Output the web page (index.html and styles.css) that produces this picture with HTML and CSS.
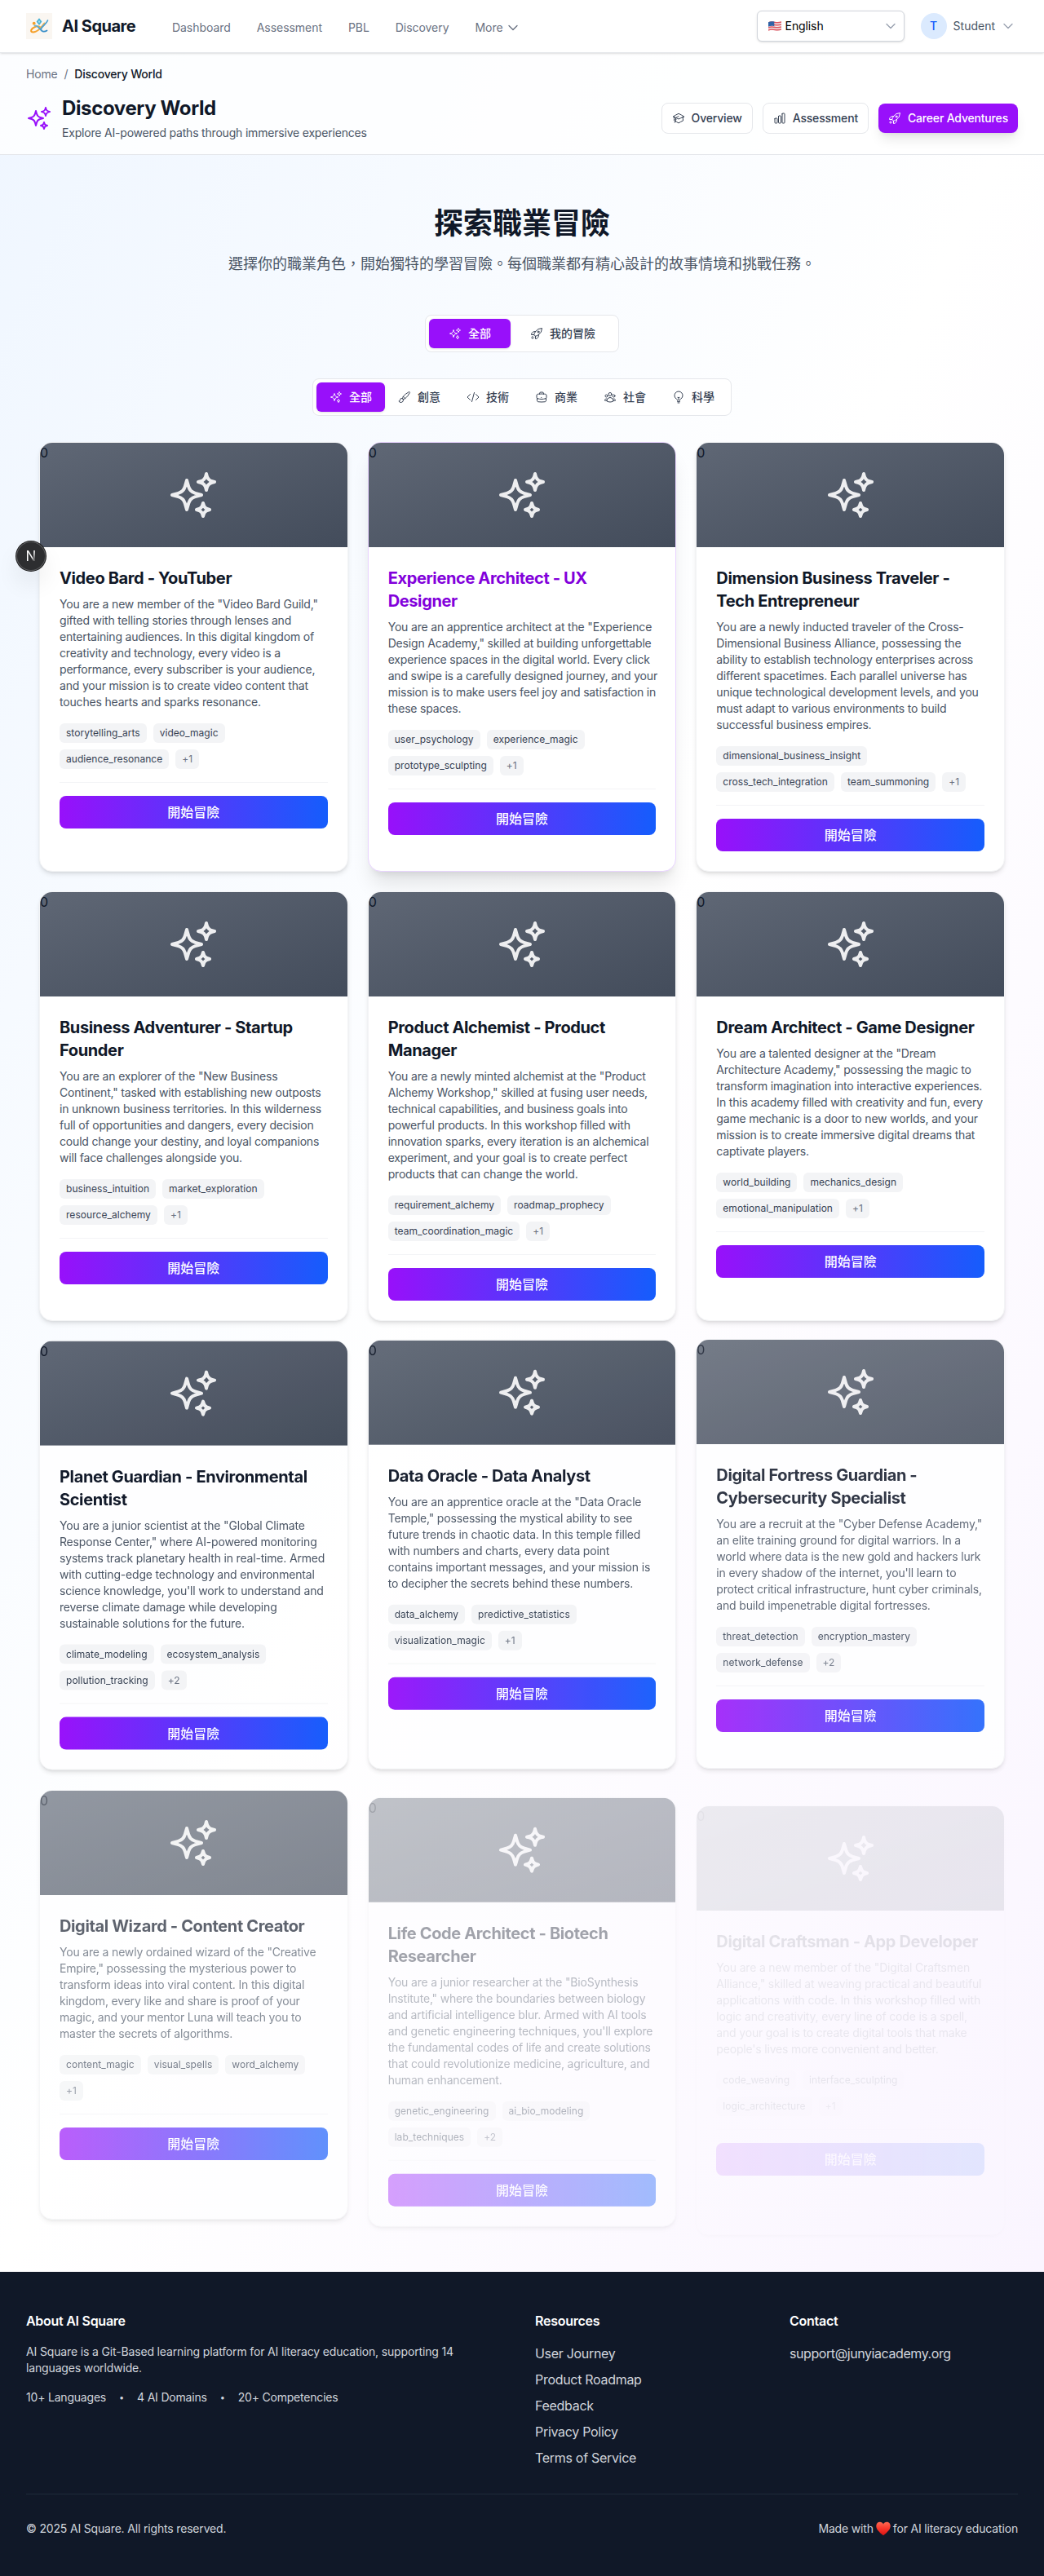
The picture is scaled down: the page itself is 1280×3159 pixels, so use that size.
FILE: index.html
```html
<!DOCTYPE html>
<html lang="zh-Hant">
<head>
<meta charset="utf-8">
<title>AI Square - Discovery World</title>
<link rel="stylesheet" href="styles.css">
</head>
<body>
<svg class="sprite" aria-hidden="true">
  <symbol id="sparkles" viewBox="0 0 24 24"><path d="M9.813 15.904 9 18.75l-.813-2.846a4.5 4.5 0 0 0-3.09-3.09L2.25 12l2.846-.813a4.5 4.5 0 0 0 3.09-3.09L9 5.25l.813 2.846a4.5 4.5 0 0 0 3.09 3.09L15.75 12l-2.846.813a4.5 4.5 0 0 0-3.09 3.09ZM18.259 8.715 18 9.75l-.259-1.035a3.375 3.375 0 0 0-2.455-2.456L14.25 6l1.036-.259a3.375 3.375 0 0 0 2.455-2.456L18 2.25l.259 1.035a3.375 3.375 0 0 0 2.456 2.456L21.75 6l-1.035.259a3.375 3.375 0 0 0-2.456 2.456ZM16.894 20.567 16.5 21.75l-.394-1.183a2.25 2.25 0 0 0-1.423-1.423L13.5 18.75l1.183-.394a2.25 2.25 0 0 0 1.423-1.423l.394-1.183.394 1.183a2.25 2.25 0 0 0 1.423 1.423l1.183.394-1.183.394a2.25 2.25 0 0 0-1.423 1.423Z"/></symbol>
  <symbol id="rocket" viewBox="0 0 24 24"><path d="M15.59 14.37a6 6 0 0 1-5.84 7.38v-4.8m5.84-2.58a14.98 14.98 0 0 0 6.16-12.12A14.98 14.98 0 0 0 9.631 8.41m5.96 5.96a14.926 14.926 0 0 1-5.841 2.58m-.119-8.54a6 6 0 0 0-7.381 5.84h4.8m2.581-5.84a14.927 14.927 0 0 0-2.58 5.84m2.699 2.7c-.103.021-.207.041-.311.06a15.09 15.09 0 0 1-2.448-2.448 14.9 14.9 0 0 1 .06-.312m-2.24 2.39a4.493 4.493 0 0 0-1.757 4.306 4.493 4.493 0 0 0 4.306-1.758M16.5 9a1.5 1.5 0 1 1-3 0 1.5 1.5 0 0 1 3 0Z"/></symbol>
  <symbol id="cap" viewBox="0 0 24 24"><path d="M4.26 10.147a60.438 60.438 0 0 0-.491 6.347A48.62 48.62 0 0 1 12 20.904a48.62 48.62 0 0 1 8.232-4.41 60.46 60.46 0 0 0-.491-6.347m-15.482 0a50.636 50.636 0 0 0-2.658-.813A59.906 59.906 0 0 1 12 3.493a59.903 59.903 0 0 1 10.399 5.84c-.896.248-1.783.52-2.658.814m-15.482 0A50.717 50.717 0 0 1 12 13.489a50.702 50.702 0 0 1 7.74-3.342M6.75 15a.75.75 0 1 0 0-1.5.75.75 0 0 0 0 1.5Zm0 0v-3.675A55.378 55.378 0 0 1 12 8.443m-7.007 11.55A5.981 5.981 0 0 0 6.75 15.75v-1.5"/></symbol>
  <symbol id="chart" viewBox="0 0 24 24"><path d="M3 13.125C3 12.504 3.504 12 4.125 12h2.25c.621 0 1.125.504 1.125 1.125v6.75C7.5 20.496 6.996 21 6.375 21h-2.25A1.125 1.125 0 0 1 3 19.875v-6.75ZM9.75 8.625c0-.621.504-1.125 1.125-1.125h2.25c.621 0 1.125.504 1.125 1.125v11.25c0 .621-.504 1.125-1.125 1.125h-2.25a1.125 1.125 0 0 1-1.125-1.125V8.625ZM16.5 4.125c0-.621.504-1.125 1.125-1.125h2.25C20.496 3 21 3.504 21 4.125v15.75c0 .621-.504 1.125-1.125 1.125h-2.25a1.125 1.125 0 0 1-1.125-1.125V4.125Z"/></symbol>
  <symbol id="brush" viewBox="0 0 24 24"><path d="M9.53 16.122a3 3 0 0 0-5.78 1.128 2.25 2.25 0 0 1-2.4 2.245 4.5 4.5 0 0 0 8.4-2.245c0-.399-.078-.78-.22-1.128Zm0 0a15.998 15.998 0 0 0 3.388-1.62m-5.043-.025a15.994 15.994 0 0 1 1.622-3.395m3.42 3.42a15.995 15.995 0 0 0 4.764-4.648l3.876-5.814a1.151 1.151 0 0 0-1.597-1.597L14.146 6.32a15.996 15.996 0 0 0-4.649 4.763m3.42 3.42a6.776 6.776 0 0 0-3.42-3.42"/></symbol>
  <symbol id="code" viewBox="0 0 24 24"><path d="M17.25 6.75 22.5 12l-5.25 5.25m-10.5 0L1.5 12l5.25-5.25m7.5-3-4.5 16.5"/></symbol>
  <symbol id="briefcase" viewBox="0 0 24 24"><path d="M20.25 14.15v4.25c0 1.094-.787 2.036-1.872 2.18-2.087.277-4.216.42-6.378.42s-4.291-.143-6.378-.42c-1.085-.144-1.872-1.086-1.872-2.18v-4.25m16.5 0a2.18 2.18 0 0 0 .75-1.661V8.706c0-1.081-.768-2.015-1.837-2.175a48.114 48.114 0 0 0-3.413-.387m4.5 8.006c-.194.165-.42.295-.673.38A23.978 23.978 0 0 1 12 15.75c-2.648 0-5.195-.429-7.577-1.22a2.016 2.016 0 0 1-.673-.38m0 0A2.18 2.18 0 0 1 3 12.489V8.706c0-1.081.768-2.015 1.837-2.175a48.111 48.111 0 0 1 3.413-.387m7.5 0V5.25A2.25 2.25 0 0 0 13.5 3h-3a2.25 2.25 0 0 0-2.25 2.25v.894m7.5 0a48.667 48.667 0 0 0-7.5 0M12 12.75h.008v.008H12v-.008Z"/></symbol>
  <symbol id="group" viewBox="0 0 24 24"><path d="M18 18.72a9.094 9.094 0 0 0 3.741-.479 3 3 0 0 0-4.682-2.72m.94 3.198.001.031c0 .225-.012.447-.037.666A11.944 11.944 0 0 1 12 21c-2.17 0-4.207-.576-5.963-1.584A6.062 6.062 0 0 1 6 18.719m12 0a5.971 5.971 0 0 0-.941-3.197m0 0A5.995 5.995 0 0 0 12 12.75a5.995 5.995 0 0 0-5.058 2.772m0 0a3 3 0 0 0-4.681 2.72 8.986 8.986 0 0 0 3.74.477m.94-3.197a5.971 5.971 0 0 0-.94 3.197M15 6.75a3 3 0 1 1-6 0 3 3 0 0 1 6 0Zm6 3a2.25 2.25 0 1 1-4.5 0 2.25 2.25 0 0 1 4.5 0Zm-13.5 0a2.25 2.25 0 1 1-4.5 0 2.25 2.25 0 0 1 4.5 0Z"/></symbol>
  <symbol id="bulb" viewBox="0 0 24 24"><path d="M12 18v-5.25m0 0a6.01 6.01 0 0 0 1.5-.189m-1.5.189a6.01 6.01 0 0 1-1.5-.189m3.75 7.478a12.06 12.06 0 0 1-4.5 0m3.75 2.383a14.406 14.406 0 0 1-3 0M14.25 18v-.192c0-.983.658-1.823 1.508-2.316a7.5 7.5 0 1 0-7.517 0c.85.493 1.509 1.333 1.509 2.316V18"/></symbol>
  <symbol id="chevron" viewBox="0 0 24 24"><path d="m19.5 8.25-7.5 7.5-7.5-7.5"/></symbol>
</svg>

<nav class="topbar">
  <div class="brand">
    <svg class="brand-logo" viewBox="0 0 32 32">
      <defs>
        <linearGradient id="lg-o" x1="0" y1="0" x2="1" y2="0"><stop offset="0" stop-color="#f59a1f"/><stop offset="1" stop-color="#f3b350"/></linearGradient>
        <linearGradient id="lg-b" x1="0" y1="0" x2="1" y2="1"><stop offset="0" stop-color="#7cc4e0"/><stop offset="1" stop-color="#2f86c5"/></linearGradient>
      </defs>
      <rect width="32" height="32" fill="#faf6f1"/>
      <path d="M16 6.2 19.4 10.6 16 15 12.600 10.6Z" fill="#48b0d3"/>
      <path d="M16 8.800 17.300 10.600 16 12.500 14.700 10.600Z" fill="#a5dcec"/>
      <circle cx="9.700" cy="12.700" r="1.900" fill="#f5a02a"/>
      <path d="M17.500 17.500C14 14.800 7.500 17.500 6.200 21.200 5.500 23.800 9 23.800 12 22.600 17.500 20.400 20 15 22.500 12.500" fill="none" stroke="url(#lg-o)" stroke-width="2" stroke-linecap="round"/>
      <path d="M26.500 9C24.500 14 20 15.500 18.500 19 17.500 22.500 22 23.500 25.500 21.500M10.500 15.500C14 15 16 18.500 18 20.500" fill="none" stroke="url(#lg-b)" stroke-width="1.800" stroke-linecap="round"/>
    </svg>
    <span class="brand-name">AI Square</span>
  </div>
  <div class="nav-links">
    <a>Dashboard</a><a>Assessment</a><a>PBL</a><a>Discovery</a>
    <a class="nav-more">More <svg class="icon"><use href="#chevron"/></svg></a>
  </div>
  <div class="nav-right">
    <div class="lang-select">
      <svg class="flag" viewBox="0 0 16 16">
        <path d="M0 3.200C3 1.700 5 2.100 8 2.700S13 3.300 16 2.200V12.800C13 14 11 13.700 8 13.100S3 12.300 0 13.700Z" fill="#f2e9ea"/>
        <path d="M0 4C3 2.500 5 2.900 8 3.500S13 4.100 16 3M0 7C3 5.500 5 5.900 8 6.500S13 7.100 16 6M0 10C3 8.500 5 8.900 8 9.500S13 10.100 16 9M0 13C3 11.500 5 11.900 8 12.500S13 13.100 16 12" fill="none" stroke="#dd5560" stroke-width="1.500"/>
        <path d="M0 3.200C2.500 2 4.500 2 7.300 2.500V8.200C4.500 7.600 2.500 7.600 0 8.800Z" fill="#2f62a6"/>
      </svg>
      <span>English</span>
      <svg class="icon chev"><use href="#chevron"/></svg>
    </div>
    <div class="user">
      <span class="avatar">T</span><span class="user-name">Student</span>
      <svg class="icon chev"><use href="#chevron"/></svg>
    </div>
  </div>
</nav>

<div class="page">
  <header class="page-head">
    <div class="crumbs"><span>Home</span><span>/</span><b>Discovery World</b></div>
    <div class="head-row">
      <div class="head-title">
        <svg class="icon head-icon"><use href="#sparkles"/></svg>
        <div><h1>Discovery World</h1><p>Explore AI-powered paths through immersive experiences</p></div>
      </div>
      <div class="head-tabs">
        <a class="tab"><svg class="icon"><use href="#cap"/></svg>Overview</a>
        <a class="tab"><svg class="icon"><use href="#chart"/></svg>Assessment</a>
        <a class="tab tab-on"><svg class="icon"><use href="#rocket"/></svg>Career Adventures</a>
      </div>
    </div>
  </header>

  <main>
    <h2>探索職業冒險</h2>
    <p class="lead">選擇你的職業角色，開始獨特的學習冒險。每個職業都有精心設計的故事情境和挑戰任務。</p>
    <div class="seg seg-wide">
      <a class="on"><svg class="icon"><use href="#sparkles"/></svg>全部</a>
      <a><svg class="icon"><use href="#rocket"/></svg>我的冒險</a>
    </div>
    <div class="seg seg-cat">
      <a class="on"><svg class="icon"><use href="#sparkles"/></svg>全部</a>
      <a><svg class="icon"><use href="#brush"/></svg>創意</a>
      <a><svg class="icon"><use href="#code"/></svg>技術</a>
      <a><svg class="icon"><use href="#briefcase"/></svg>商業</a>
      <a><svg class="icon"><use href="#group"/></svg>社會</a>
      <a><svg class="icon"><use href="#bulb"/></svg>科學</a>
    </div>

    <div class="grid">
      <article class="card">
        <div class="cover">0<svg class="icon"><use href="#sparkles"/></svg></div>
        <div class="body">
          <h3>Video Bard - YouTuber</h3>
          <p>You are a new member of the "Video Bard Guild,"
gifted with telling stories through lenses and
entertaining audiences. In this digital kingdom of
creativity and technology, every video is a
performance, every subscriber is your audience,
and your mission is to create video content that
touches hearts and sparks resonance.</p>
          <div class="tags"><span>storytelling_arts</span><span>video_magic</span><span>audience_resonance</span><span class="more">+1</span></div>
          <div class="action"><button>開始冒險</button></div>
        </div>
      </article>
      <article class="card card-hover">
        <div class="cover">0<svg class="icon"><use href="#sparkles"/></svg></div>
        <div class="body">
          <h3>Experience Architect - UX
Designer</h3>
          <p>You are an apprentice architect at the "Experience
Design Academy," skilled at building unforgettable
experience spaces in the digital world. Every click
and swipe is a carefully designed journey, and your
mission is to make users feel joy and satisfaction in
these spaces.</p>
          <div class="tags"><span>user_psychology</span><span>experience_magic</span><span>prototype_sculpting</span><span class="more">+1</span></div>
          <div class="action"><button>開始冒險</button></div>
        </div>
      </article>
      <article class="card">
        <div class="cover">0<svg class="icon"><use href="#sparkles"/></svg></div>
        <div class="body">
          <h3>Dimension Business Traveler -
Tech Entrepreneur</h3>
          <p>You are a newly inducted traveler of the Cross-
Dimensional Business Alliance, possessing the
ability to establish technology enterprises across
different spacetimes. Each parallel universe has
unique technological development levels, and you
must adapt to various environments to build
successful business empires.</p>
          <div class="tags"><span>dimensional_business_insight</span><span>cross_tech_integration</span><span>team_summoning</span><span class="more">+1</span></div>
          <div class="action"><button>開始冒險</button></div>
        </div>
      </article>
      <article class="card">
        <div class="cover">0<svg class="icon"><use href="#sparkles"/></svg></div>
        <div class="body">
          <h3>Business Adventurer - Startup
Founder</h3>
          <p>You are an explorer of the "New Business
Continent," tasked with establishing new outposts
in unknown business territories. In this wilderness
full of opportunities and dangers, every decision
could change your destiny, and loyal companions
will face challenges alongside you.</p>
          <div class="tags"><span>business_intuition</span><span>market_exploration</span><span>resource_alchemy</span><span class="more">+1</span></div>
          <div class="action"><button>開始冒險</button></div>
        </div>
      </article>
      <article class="card">
        <div class="cover">0<svg class="icon"><use href="#sparkles"/></svg></div>
        <div class="body">
          <h3>Product Alchemist - Product
Manager</h3>
          <p>You are a newly minted alchemist at the "Product
Alchemy Workshop," skilled at fusing user needs,
technical capabilities, and business goals into
powerful products. In this workshop filled with
innovation sparks, every iteration is an alchemical
experiment, and your goal is to create perfect
products that can change the world.</p>
          <div class="tags"><span>requirement_alchemy</span><span>roadmap_prophecy</span><span>team_coordination_magic</span><span class="more">+1</span></div>
          <div class="action"><button>開始冒險</button></div>
        </div>
      </article>
      <article class="card">
        <div class="cover">0<svg class="icon"><use href="#sparkles"/></svg></div>
        <div class="body">
          <h3>Dream Architect - Game Designer</h3>
          <p>You are a talented designer at the "Dream
Architecture Academy," possessing the magic to
transform imagination into interactive experiences.
In this academy filled with creativity and fun, every
game mechanic is a door to new worlds, and your
mission is to create immersive digital dreams that
captivate players.</p>
          <div class="tags"><span>world_building</span><span>mechanics_design</span><span>emotional_manipulation</span><span class="more">+1</span></div>
          <div class="action"><button>開始冒險</button></div>
        </div>
      </article>
      <article class="card enter-7">
        <div class="cover">0<svg class="icon"><use href="#sparkles"/></svg></div>
        <div class="body">
          <h3>Planet Guardian - Environmental
Scientist</h3>
          <p>You are a junior scientist at the "Global Climate
Response Center," where AI-powered monitoring
systems track planetary health in real-time. Armed
with cutting-edge technology and environmental
science knowledge, you'll work to understand and
reverse climate damage while developing
sustainable solutions for the future.</p>
          <div class="tags"><span>climate_modeling</span><span>ecosystem_analysis</span><span>pollution_tracking</span><span class="more">+2</span></div>
          <div class="action"><button>開始冒險</button></div>
        </div>
      </article>
      <article class="card enter-8">
        <div class="cover">0<svg class="icon"><use href="#sparkles"/></svg></div>
        <div class="body">
          <h3>Data Oracle - Data Analyst</h3>
          <p>You are an apprentice oracle at the "Data Oracle
Temple," possessing the mystical ability to see
future trends in chaotic data. In this temple filled
with numbers and charts, every data point
contains important messages, and your mission is
to decipher the secrets behind these numbers.</p>
          <div class="tags"><span>data_alchemy</span><span>predictive_statistics</span><span>visualization_magic</span><span class="more">+1</span></div>
          <div class="action"><button>開始冒險</button></div>
        </div>
      </article>
      <article class="card enter-9">
        <div class="cover">0<svg class="icon"><use href="#sparkles"/></svg></div>
        <div class="body">
          <h3>Digital Fortress Guardian -
Cybersecurity Specialist</h3>
          <p>You are a recruit at the "Cyber Defense Academy,"
an elite training ground for digital warriors. In a
world where data is the new gold and hackers lurk
in every shadow of the internet, you'll learn to
protect critical infrastructure, hunt cyber criminals,
and build impenetrable digital fortresses.</p>
          <div class="tags"><span>threat_detection</span><span>encryption_mastery</span><span>network_defense</span><span class="more">+2</span></div>
          <div class="action"><button>開始冒險</button></div>
        </div>
      </article>
      <article class="card enter-10">
        <div class="cover">0<svg class="icon"><use href="#sparkles"/></svg></div>
        <div class="body">
          <h3>Digital Wizard - Content Creator</h3>
          <p>You are a newly ordained wizard of the "Creative
Empire," possessing the mysterious power to
transform ideas into viral content. In this digital
kingdom, every like and share is proof of your
magic, and your mentor Luna will teach you to
master the secrets of algorithms.</p>
          <div class="tags"><span>content_magic</span><span>visual_spells</span><span>word_alchemy</span><span class="more">+1</span></div>
          <div class="action"><button>開始冒險</button></div>
        </div>
      </article>
      <article class="card enter-11">
        <div class="cover">0<svg class="icon"><use href="#sparkles"/></svg></div>
        <div class="body">
          <h3>Life Code Architect - Biotech
Researcher</h3>
          <p>You are a junior researcher at the "BioSynthesis
Institute," where the boundaries between biology
and artificial intelligence blur. Armed with AI tools
and genetic engineering techniques, you'll explore
the fundamental codes of life and create solutions
that could revolutionize medicine, agriculture, and
human enhancement.</p>
          <div class="tags"><span>genetic_engineering</span><span>ai_bio_modeling</span><span>lab_techniques</span><span class="more">+2</span></div>
          <div class="action"><button>開始冒險</button></div>
        </div>
      </article>
      <article class="card enter-12">
        <div class="cover">0<svg class="icon"><use href="#sparkles"/></svg></div>
        <div class="body">
          <h3>Digital Craftsman - App Developer</h3>
          <p>You are a new member of the "Digital Craftsmen
Alliance," skilled at weaving practical and beautiful
applications with code. In this workshop filled with
logic and creativity, every line of code is a spell,
and your goal is to create digital tools that make
people's lives more convenient and better.</p>
          <div class="tags"><span>code_weaving</span><span>interface_sculpting</span><span>logic_architecture</span><span class="more">+1</span></div>
          <div class="action"><button>開始冒險</button></div>
        </div>
      </article>
    </div>
  </main>
</div>

<footer class="footer">
  <div class="foot-grid">
    <section class="about">
      <h4>About AI Square</h4>
      <p>AI Square is a Git-Based learning platform for AI literacy education, supporting 14
languages worldwide.</p>
      <div class="facts"><span>10+ Languages</span><span class="dot">•</span><span>4 AI Domains</span><span class="dot">•</span><span>20+ Competencies</span></div>
    </section>
    <section>
      <h4>Resources</h4>
      <ul><li>User Journey</li><li>Product Roadmap</li><li>Feedback</li><li>Privacy Policy</li><li>Terms of Service</li></ul>
    </section>
    <section>
      <h4>Contact</h4>
      <ul><li class="mail">support@junyiacademy.org</li></ul>
    </section>
  </div>
  <div class="foot-bottom">
    <span>© 2025 AI Square. All rights reserved.</span>
    <span class="made">Made with <svg class="heart" viewBox="1 1 16 16.500"><defs><linearGradient id="hg" x1="0" y1="0" x2="0" y2="1"><stop offset="0" stop-color="#ff6a52"/><stop offset=".5" stop-color="#f8352a"/><stop offset="1" stop-color="#d81313"/></linearGradient></defs><path d="M9 16.800C5 13.600 1 10.200 1 6.200 1 3.500 2.900 1.700 5.100 1.700 6.900 1.700 8.300 2.700 9 4.200 9.700 2.700 11.100 1.700 12.900 1.700 15.100 1.700 17 3.500 17 6.200 17 10.200 13 13.600 9 16.800Z" fill="url(#hg)"/></svg> for AI literacy education</span>
  </div>
</footer>

<div class="dev-badge"><span>N</span></div>
</body>
</html>
```

FILE: styles.css
```css
* { box-sizing: border-box; margin: 0; padding: 0; }
body {
  position: relative;
  font-family: Inter, "Noto Sans CJK TC", sans-serif;
  font-size: 16px;
  line-height: 24px;
  color: #101828;
  background: #fff;
}
.sprite { position: absolute; width: 0; height: 0; }
.icon {
  width: 16px;
  height: 16px;
  flex: none;
  fill: none;
  stroke: currentColor;
  stroke-width: 1.5;
  stroke-linecap: round;
  stroke-linejoin: round;
}

/* top bar */
.topbar {
  position: relative;
  z-index: 2;
  display: flex;
  align-items: center;
  height: 65px;
  padding: 0 32px 1px;
  background: #fff;
  border-bottom: 1px solid #e5e7eb;
  box-shadow: 0 1px 3px rgba(0,0,0,.1), 0 1px 2px -1px rgba(0,0,0,.1);
}
.brand { display: flex; align-items: center; gap: 12px; width: 179px; }
.brand-logo { width: 32px; height: 32px; }
.brand-name { font-size: 20px; font-weight: 700; line-height: 28px; letter-spacing: -.5px; }
.nav-links {
  display: flex;
  gap: 32px;
  padding-top: 4px;
  font-size: 14px;
  line-height: 20px;
  letter-spacing: -.05px;
  color: #6a7282;
}
.nav-more { display: flex; align-items: center; gap: 4px; }
.nav-more .icon { stroke-width: 2; }
.nav-right { display: flex; align-items: center; gap: 20px; margin-left: auto; font-size: 14px; line-height: 20px; }
.lang-select {
  display: flex;
  align-items: center;
  gap: 5px;
  width: 181px;
  height: 38px;
  padding: 0 8px 0 13px;
  color: #000;
  letter-spacing: -.1px;
  background: #fff;
  border: 1px solid #d1d5dc;
  border-radius: 6px;
  box-shadow: 0 1px 3px rgba(0,0,0,.1), 0 1px 2px -1px rgba(0,0,0,.1);
}
.flag { width: 16px; height: 16px; }
.chev { margin-left: auto; color: #99a1af; stroke-width: 2; }
.user { display: flex; align-items: center; gap: 8px; padding-right: 4px; color: #4a5565; }
.avatar {
  display: grid;
  place-items: center;
  width: 32px;
  height: 32px;
  border-radius: 50%;
  background: #dbeafe;
  color: #155dfc;
  font-weight: 500;
}

/* page header */
.page { background: linear-gradient(to bottom right, #eff6ff, #fff 50%, #faf5ff); }
.page-head { height: 125px; padding: 16px 32px; background: rgba(255,255,255,.8); border-bottom: 1px solid #e5e7eb; }
.crumbs { display: flex; gap: 8px; margin-bottom: 16px; font-size: 14px; line-height: 20px; letter-spacing: -.2px; color: #6a7282; }
.crumbs b { font-weight: 500; color: #101828; }
.head-row { display: flex; align-items: center; justify-content: space-between; }
.head-title { display: flex; align-items: center; gap: 12px; }
.head-icon { width: 32px; height: 32px; color: #9810fa; }
.head-title h1 { font-size: 24px; line-height: 32px; letter-spacing: -.37px; }
.head-title p { margin-top: 4px; font-size: 14px; line-height: 20px; letter-spacing: -.195px; color: #4a5565; }
.head-tabs { display: flex; align-items: center; gap: 12px; }
.tab {
  display: flex;
  align-items: center;
  gap: 8px;
  padding: 8px 12px;
  font-size: 14px;
  font-weight: 500;
  line-height: 20px;
  letter-spacing: -.18px;
  color: #364153;
  background: #fff;
  border: 1px solid #e5e7eb;
  border-radius: 8px;
}
.tab-on { color: #fff; background: #9810fa; border: 0; box-shadow: 0 10px 15px -3px rgba(0,0,0,.1), 0 4px 6px -4px rgba(0,0,0,.1); }

/* intro and filters */
main { display: flex; flex-direction: column; align-items: center; padding: 64px 48px; }
h2 { font-size: 36px; line-height: 40px; margin-bottom: 16px; }
.lead { font-size: 18px; line-height: 28px; color: #4a5565; margin-bottom: 48px; }
.seg { display: flex; padding: 4px; margin-bottom: 32px; background: #fff; border: 1px solid #e5e7eb; border-radius: 8px; }
.seg a {
  display: flex;
  align-items: center;
  gap: 8px;
  height: 36px;
  padding: 0 16px;
  font-size: 14px;
  font-weight: 500;
  line-height: 20px;
  color: #364153;
  border-radius: 6px;
}
.seg-wide a { padding: 0 24px; }
.seg .on { color: #fff; background: #9810fa; box-shadow: 0 1px 3px rgba(0,0,0,.1), 0 1px 2px -1px rgba(0,0,0,.1); }

/* career cards */
.grid { display: grid; grid-template-columns: repeat(3, 1fr); gap: 24px; width: 100%; }
.card {
  height: 527px;
  overflow: hidden;
  background: #fff;
  border: 1px solid #f3f4f6;
  border-radius: 16px;
  box-shadow: 0 4px 6px -1px rgba(0,0,0,.1), 0 2px 4px -2px rgba(0,0,0,.1);
}
.card-hover { border-color: #e9d4ff; box-shadow: 0 20px 25px -5px rgba(0,0,0,.1), 0 8px 10px -6px rgba(0,0,0,.1); }
.card-hover h3 { color: #8200db; }
.cover { position: relative; height: 128px; background: linear-gradient(to bottom right, #5f6775, #434c5b); }
.cover .icon { position: absolute; inset: 0; margin: auto; width: 64px; height: 64px; color: #fff; opacity: .9; }
.body { padding: 24px; }
.body h3 { margin-bottom: 8px; font-size: 20px; line-height: 28px; letter-spacing: -.37px; white-space: pre-line; }
.body p { margin-bottom: 16px; font-size: 14px; line-height: 20px; letter-spacing: -.18px; color: #4a5565; white-space: pre; }
.tags { display: flex; flex-wrap: wrap; gap: 8px; margin-bottom: 16px; }
.tags span { padding: 4px 8px; font-size: 12px; line-height: 16px; letter-spacing: .04px; color: #364153; background: #f3f4f6; border-radius: 6px; }
.tags .more { color: #6a7282; }
.action { padding-top: 16px; border-top: 1px solid #f3f4f6; }
.action button {
  display: block;
  width: 100%;
  height: 40px;
  border: 0;
  border-radius: 8px;
  background: linear-gradient(to right, #9810fa, #155dfc);
  color: #fff;
  font: 500 16px/24px Inter, "Noto Sans CJK TC", sans-serif;
}

.enter-7 { opacity: .99; transform: translateY(-.4px); }
.enter-8 { opacity: .96; transform: translateY(-1.300px); }
.enter-9 { opacity: .86; transform: translateY(-2px); }
.enter-10 { opacity: .67; }
.enter-11 { opacity: .39; transform: translateY(8.700px); }
.enter-12 { opacity: .1; transform: translateY(19px); }

/* footer */
.footer { height: 373px; padding: 48px 32px; background: #101828; color: #d1d5dc; font-size: 14px; line-height: 20px; }
.foot-grid { display: grid; grid-template-columns: repeat(4, 1fr); gap: 32px; margin-bottom: 32px; }
.about { grid-column: span 2; }
.footer h4 { margin-bottom: 16px; font-size: 16px; font-weight: 600; line-height: 24px; letter-spacing: -.27px; color: #fff; }
.about p { margin-bottom: 16px; letter-spacing: -.15px; white-space: pre-line; }
.facts { display: flex; gap: 16px; letter-spacing: -.2px; }
.facts .dot { width: 6px; font-size: 11px; }
.footer ul { display: grid; gap: 8px; list-style: none; font-size: 16px; line-height: 24px; letter-spacing: -.3px; }
.footer .mail { letter-spacing: -.42px; }
.foot-bottom { display: flex; justify-content: space-between; padding-top: 32px; border-top: 1px solid #1e2939; letter-spacing: -.17px; }
.made { display: flex; align-items: center; gap: 3px; }
.heart { width: 18px; height: 18px; }

/* floating developer badge */
.dev-badge {
  position: absolute;
  z-index: 3;
  left: 20px;
  top: 664px;
  display: grid;
  place-items: center;
  width: 36px;
  height: 36px;
  border-radius: 50%;
  background: #2d2e30;
  box-shadow: inset 0 0 0 1px #5b5c5e, 0 0 0 1px #171717, 0 16px 32px -8px rgba(0,0,0,.24);
}
.dev-badge span {
  font-size: 17px;
  line-height: 20px;
  background: linear-gradient(115deg, #fff 60%, #666 78%);
  background-clip: text;
  -webkit-background-clip: text;
  color: transparent;
}
```
